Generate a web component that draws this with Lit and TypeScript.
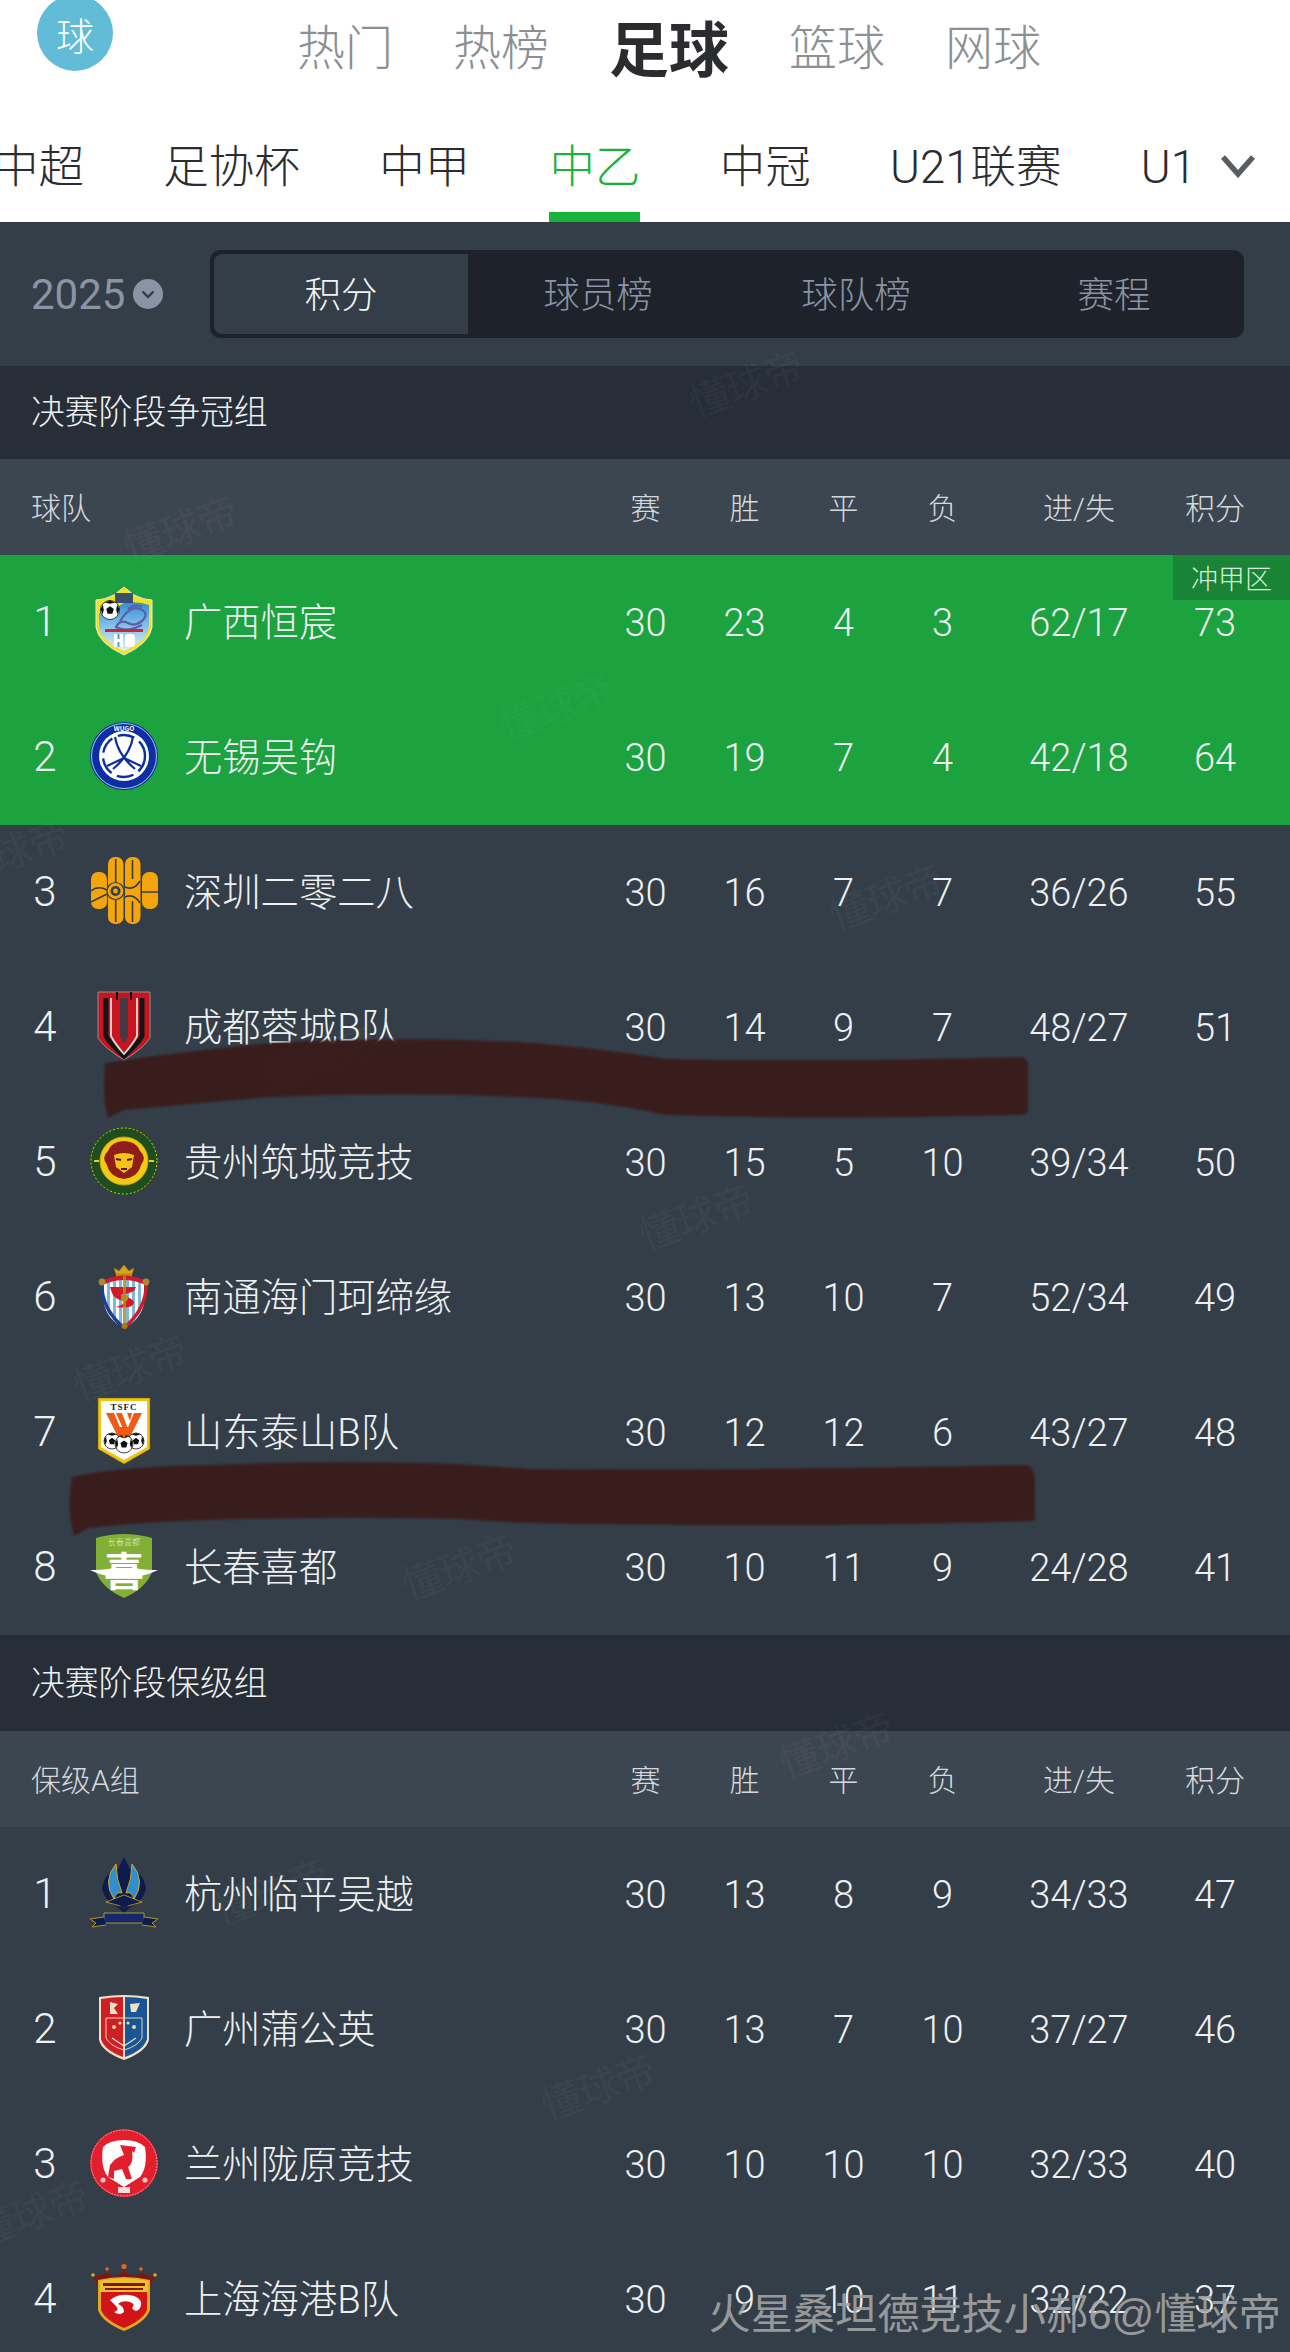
import { LitElement, html, css, svg } from "lit";
import { customElement } from "lit/decorators.js";

type Row = [number, string, string, number, number, number, number, string, number];

const BALL = (cx: number, cy: number, r: number) => svg`
  <circle cx=${cx} cy=${cy} r=${r} fill="#fff" stroke="#111" stroke-width=".8"/>
  <polygon points="${cx},${cy - r * 0.4} ${cx + r * 0.4},${cy - r * 0.1} ${cx + r * 0.25},${cy + r * 0.4} ${cx - r * 0.25},${cy + r * 0.4} ${cx - r * 0.4},${cy - r * 0.1}" fill="#111"/>
  <path d="M${cx - r * 0.55} ${cy - r * 0.8}L${cx} ${cy - r}L${cx + r * 0.55} ${cy - r * 0.8}L${cx} ${cy - r * 0.65}Z" fill="#111"/>
  <path d="M${cx - r} ${cy - r * 0.1}L${cx - r * 0.75} ${cy - r * 0.55}L${cx - r * 0.65} ${cy}L${cx - r * 0.8} ${cy + r * 0.5}Z" fill="#111"/>
  <path d="M${cx + r} ${cy - r * 0.1}L${cx + r * 0.75} ${cy - r * 0.55}L${cx + r * 0.65} ${cy}L${cx + r * 0.8} ${cy + r * 0.5}Z" fill="#111"/>`;

const LOGOS: Record<string, unknown> = {
  guangxi: svg`
    <defs><linearGradient id="gx" x1="0" y1="0" x2="0" y2="1"><stop offset="0" stop-color="#2f8ed6"/><stop offset=".55" stop-color="#8fc8ea"/><stop offset="1" stop-color="#dff0fa"/></linearGradient></defs>
    <path d="M34 0 L44 8 Q54 13 62 13 L62 40 Q60 56 34 68 Q8 56 6 40 L6 13 Q14 13 24 8Z" fill="#f3e21a" stroke="#e4ecf2" stroke-width="1"/>
    <path d="M9 26 Q22 24 34 16 Q48 14 59 18 L59 40 Q57 54 34 64 Q11 54 9 40Z" fill="url(#gx)"/>
    <rect x="25" y="6" width="18" height="10" fill="#3a4f6e"/>
    <path d="M30 34 q10 -16 20 -12 q10 4 2 12 q-8 6 -14 2 q-8 -4 -12 4 q10 6 26 -2 M38 22 q8 -6 14 -2" fill="none" stroke="#5a5fa8" stroke-width="2.2"/>
    ${BALL(20, 23, 9.5)}
    <rect x="15" y="42" width="38" height="3" fill="#d2233a"/>
    <rect x="24" y="47" width="9" height="13" fill="#fff"/><rect x="35" y="47" width="10" height="13" rx="3.5" fill="#fff"/>
    <rect x="27.5" y="47" width="2" height="5" fill="#4f9ed6"/><rect x="27.5" y="55" width="2" height="5" fill="#4f9ed6"/>`,
  wuxi: svg`
    <circle cx="34" cy="34" r="34" fill="#0c2fa6"/>
    <circle cx="34" cy="34" r="32.5" fill="none" stroke="#dfe6f5" stroke-width=".8"/>
    <circle cx="34" cy="34" r="25" fill="#fff"/>
    <circle cx="34" cy="34" r="21" fill="none" stroke="#0c2fa6" stroke-width="2.4" stroke-dasharray="17 6"/>
    <path d="M25 15 Q28 33 45 47 M43 15 Q40 33 23 47 M17 44 L34 36 L51 44" fill="none" stroke="#0c2fa6" stroke-width="2.2"/>
    <text x="34" y="9" text-anchor="middle" class="lt" font-size="6.5" fill="#fff" font-weight="700">WUGO</text>`,
  shenzhen: svg`
    <g fill="#f5a50c">
      <rect x="18" y="0" width="15.5" height="67" rx="7"/><rect x="35" y="0" width="15.5" height="67" rx="7"/>
      <rect x="1" y="15" width="16" height="37" rx="7"/><rect x="52" y="15" width="16" height="37" rx="7"/>
    </g>
    <path d="M25.7 2 V25 M25.7 43 V65 M42.5 3 V22 M42.5 44 V65 M1 34 Q8 28 17 33 M52 35 H68 M1 45 L17 37" stroke="#343e48" stroke-width="1.6" fill="none"/>
    <path d="M35 30 Q44 34 50 24 M35 40 Q44 36 50 46" stroke="#343e48" stroke-width="1.6" fill="none"/>
    <circle cx="25.5" cy="34" r="8.5" fill="#f5a50c" stroke="#343e48" stroke-width="1.2"/>
    <circle cx="25.5" cy="34" r="5" fill="#343e48"/><circle cx="25.5" cy="34" r="2.4" fill="#f5a50c"/>`,
  chengdu: svg`
    <path d="M8 0 H60 V46 Q54 56 34 68 Q14 56 8 46Z" fill="#c8141f" stroke="#8f8f8f" stroke-width="1"/>
    <path d="M16 6 V44 Q20 52 34 64 Q48 52 52 44 V6" fill="none" stroke="#141414" stroke-width="5"/>
    <path d="M21 6 V44 Q25 52 34 62 Q43 52 47 44 V6" fill="none" stroke="#dcdcdc" stroke-width="1.8"/>
    <path d="M25 6 V44 L34 58 L43 44 V6 H38 V44 L34 52 L30 44 V6Z" fill="#c8141f"/>
    <rect x="26" y="0" width="2" height="8" fill="#141414"/><rect x="40" y="0" width="2" height="8" fill="#141414"/>
    <path d="M30 6 H38 V44 L34 52 L30 44Z" fill="#343e48" opacity=".9"/>`,
  guizhou: svg`
    <circle cx="34" cy="34" r="34" fill="#1e4d1f"/>
    <circle cx="34" cy="34" r="33" fill="none" stroke="#e6d015" stroke-width="1" stroke-dasharray="2 2"/>
    <circle cx="34" cy="34" r="24" fill="#f3c913"/><circle cx="34" cy="34" r="24" fill="none" stroke="#c9a80c" stroke-width="1"/>
    <path d="M34 14 Q46 14 50 24 Q57 30 51 38 Q48 50 34 52 Q20 50 17 38 Q11 30 18 24 Q22 14 34 14Z" fill="#8f1e1a"/>
    <path d="M24 28 Q34 24 44 28 L42 40 L34 46 L26 40Z" fill="#f1c416"/>
    <path d="M26 32 L31 33 M37 33 L42 32 M31 42 H37" stroke="#5a1410" stroke-width="2"/>
    <rect x="4" y="33" width="5" height="2" fill="#e6d015"/><rect x="59" y="33" width="5" height="2" fill="#e6d015"/>`,
  nantong: svg`
    <path d="M24 6 L26 12 H42 L44 6 L39 9 L34 3 L29 9Z" fill="#d9a520" stroke="#a87a10" stroke-width=".6"/>
    <rect x="26" y="12" width="16" height="3" fill="#c58a12"/>
    <path d="M14 20 Q34 12 54 20 L54 42 Q50 58 34 66 Q18 58 14 42Z" fill="#fff"/>
    <clipPath id="nt"><path d="M14 20 Q34 12 54 20 L54 42 Q50 58 34 66 Q18 58 14 42Z"/></clipPath>
    <g clip-path="url(#nt)" fill="#7db9dc">
      <rect x="17" y="14" width="3" height="50"/><rect x="23" y="14" width="3" height="50"/><rect x="29" y="14" width="3" height="50"/><rect x="36" y="14" width="3" height="50"/><rect x="42" y="14" width="3" height="50"/><rect x="48" y="14" width="3" height="50"/>
    </g>
    <path d="M12 22 Q11 46 34 66" fill="none" stroke="#1d3f94" stroke-width="3.4"/>
    <path d="M56 22 Q57 46 34 66" fill="none" stroke="#d21a2a" stroke-width="3.4"/>
    <path d="M14 18 Q34 9 54 18 L53 22 Q34 14 15 22Z" fill="#d21a2a"/>
    <circle cx="12" cy="20" r="3.4" fill="#b0862b"/><circle cx="56" cy="20" r="3.4" fill="#b0862b"/>
    <path d="M20 25 H46 L44 29 Q38 32 30 33 Q44 36 44 41 Q42 47 26 45 Q36 42 34 39 Q24 37 22 31Z" fill="#d21a2a"/>
    <rect x="33" y="14" width="3" height="52" fill="#b98a20" opacity=".85"/><circle cx="34.5" cy="36" r="3.6" fill="#b98a20"/><circle cx="34.5" cy="64" r="3" fill="#a87a10"/>`,
  shandong: svg`
    <path d="M8 1 H60 V52 L34 67 L8 52Z" fill="#f1c40f" stroke="#6b5a10" stroke-width=".5"/>
    <path d="M11 4 H57 V50 L34 63 L11 50Z" fill="#fff"/>
    <text x="34" y="12.5" text-anchor="middle" font-family="Liberation Serif, serif" font-size="9" font-weight="700" letter-spacing="1" fill="#222">TSFC</text>
    <path d="M16 16 H24 L34 40 L44 16 H52 L38 44 H30Z M26 16 H32 L38 32 L35 36Z M37 16 H42 L40 24Z" fill="#ef5a16"/>
    ${BALL(22, 44, 8)}${BALL(46, 44, 8)}${BALL(34, 47, 9)}
    <path d="M28 30 L34 42 L40 30" fill="#ef5a16"/>`,
  changchun: svg`
    <path d="M6 6 Q34 -2 62 6 L62 40 Q56 56 34 66 Q12 56 6 40Z" fill="#82b035"/>
    <text x="34" y="13" text-anchor="middle" class="lt" font-size="8" fill="#e8f2d4">长春喜都</text>
    <path d="M0 38 Q16 38 22 36 H46 Q52 38 68 38 Q56 44 46 44 H22 Q12 44 0 38Z" fill="#fff"/>
    <text x="34" y="54" text-anchor="middle" class="lt" font-size="40" font-weight="700" fill="#fff">喜</text>`,
  hangzhou: svg`
    <path d="M34 -2 L40 10 Q54 14 56 30 Q52 44 41 48 L34 54 L27 48 Q16 44 12 30 Q14 14 28 10Z" fill="#0d1b4d"/>
    <path d="M26 5 Q12 22 24 40 Q26 32 32 34 Q26 20 26 5Z M42 5 Q56 22 44 40 Q42 32 36 34 Q42 20 42 5Z" fill="#2f8fd0" stroke="#d6a91e" stroke-width="1"/>
    <path d="M16 43 L34 36 L52 43 L34 48Z" fill="#0d1b4d" stroke="#d6a91e" stroke-width=".8"/>
    <circle cx="34" cy="43" r="5.5" fill="#0d1b4d"/>
    <path d="M14 54 H54 V64 H14Z" fill="#14296b" stroke="#d6a91e" stroke-width=".8"/>
    <path d="M14 58 L0 60 L6 64 L2 68 L16 66 M54 58 L68 60 L62 64 L66 68 L52 66" fill="#0d1b4d" stroke="#d6a91e" stroke-width=".8"/>`,
  guangzhou: svg`
    <path d="M9 3 Q34 -1 59 3 V46 Q56 58 34 66 Q12 58 9 46Z" fill="#efe2c2"/>
    <path d="M11 5 Q22 3 33 3 V63 Q14 56 11 45Z" fill="#cf1f26"/>
    <path d="M35 3 Q46 3 57 5 V45 Q54 56 35 63Z" fill="#1a5596"/>
    <path d="M16 24 H52 V44 Q48 52 34 56 Q20 52 16 44Z" fill="none" stroke="#efe2c2" stroke-width=".9"/>
    <path d="M20 8 L28 10 L24 14 L28 20 L20 20Z M40 10 L50 9 L46 18 L41 18Z" fill="#efe2c2"/>
    <g fill="#f2d3a4"><circle cx="24" cy="33" r="2"/><circle cx="30" cy="29" r="1.6"/><circle cx="44" cy="33" r="2"/><circle cx="38" cy="29" r="1.6"/></g>
    <path d="M34 32 V48 M22 44 Q28 48 34 52 Q40 48 46 44" stroke="#efe2c2" stroke-width="1.2" fill="none"/>`,
  lanzhou: svg`
    <circle cx="34" cy="34" r="34" fill="#e31f2d"/>
    <circle cx="34" cy="34" r="33" fill="none" stroke="#f5b5ba" stroke-width=".8" stroke-dasharray="2 1"/>
    <path d="M34 11 Q48 11 55 18 Q58 38 50 48 L34 58 L18 48 Q10 38 13 18 Q20 11 34 11Z" fill="#fff"/>
    <path d="M30 16 L46 18 L44 24 L42 22 Q44 34 38 38 L42 50 L36 50 L32 40 L24 42 L24 50 L18 48 L20 36 Q26 28 34 26Z" fill="#e31f2d"/>
    <rect x="28" y="58" width="12" height="6" fill="#fff" opacity=".85"/>
    <circle cx="13" cy="51" r="2.6" fill="#f7c2c5"/><circle cx="55" cy="51" r="2.6" fill="#f7c2c5"/>`,
  shanghai: svg`
    <g fill="#e8641b"><circle cx="34" cy="2.5" r="2.6"/><circle cx="17" cy="5" r="1.8"/><circle cx="51" cy="5" r="1.8"/></g>
    <g fill="#e3a81d"><circle cx="3" cy="11" r="1.8"/><circle cx="65" cy="11" r="1.8"/></g>
    <path d="M3 13 L17 9 L25 13 L34 7 L43 13 L51 9 L65 13 L60 22 H8Z" fill="#7d1712"/>
    <path d="M8 16 Q34 10 60 16 V46 Q56 58 34 67 Q12 58 8 46Z" fill="#e3a81d"/>
    <path d="M11 28 H57 V46 Q53 56 34 64 Q15 56 11 46Z" fill="#d01418"/>
    <path d="M10 17 Q34 12 58 17 V28 H10Z" fill="#efc130"/>
    <rect x="13" y="19" width="42" height="3" fill="#7d1712"/><rect x="15" y="24" width="38" height="2" fill="#7d1712"/>
    <path d="M20 36 Q30 28 44 32 Q54 36 50 44 Q46 50 42 44 Q46 40 40 38 Q32 36 28 40 Q34 42 34 48 Q30 52 24 48 Q30 46 26 42 Z" fill="#fff"/>`,
};

const GROUP_A: Row[] = [
  [1, "guangxi", "广西恒宸", 30, 23, 4, 3, "62/17", 73],
  [2, "wuxi", "无锡吴钩", 30, 19, 7, 4, "42/18", 64],
  [3, "shenzhen", "深圳二零二八", 30, 16, 7, 7, "36/26", 55],
  [4, "chengdu", "成都蓉城B队", 30, 14, 9, 7, "48/27", 51],
  [5, "guizhou", "贵州筑城竞技", 30, 15, 5, 10, "39/34", 50],
  [6, "nantong", "南通海门珂缔缘", 30, 13, 10, 7, "52/34", 49],
  [7, "shandong", "山东泰山B队", 30, 12, 12, 6, "43/27", 48],
  [8, "changchun", "长春喜都", 30, 10, 11, 9, "24/28", 41],
];
const GROUP_B: Row[] = [
  [1, "hangzhou", "杭州临平吴越", 30, 13, 8, 9, "34/33", 47],
  [2, "guangzhou", "广州蒲公英", 30, 13, 7, 10, "37/27", 46],
  [3, "lanzhou", "兰州陇原竞技", 30, 10, 10, 10, "32/33", 40],
  [4, "shanghai", "上海海港B队", 30, 9, 10, 11, "32/22", 37],
];

const MARKS: [number, number][] = [
  [745, 382], [179, 527], [555, 705], [10, 850], [885, 895], [318, 1057], [695, 1215],
  [129, 1366], [458, 1565], [835, 1743], [270, 1890], [597, 2085], [30, 2211],
];

@customElement("app-root")
export class AppRoot extends LitElement {
  static styles = css`
    :host {
      display: block; position: relative; width: 1290px; height: 2352px; overflow: hidden;
      background: #343e48; color: #eef0f2;
      font-family: Roboto, "Noto Sans CJK SC", sans-serif; font-weight: 300;
    }
    .lt { font-family: "Noto Sans CJK SC", sans-serif; }
    .top { height: 100px; background: #fff; display: flex; align-items: center; padding-left: 297px; gap: 60px; position: relative; overflow: hidden; }
    .ball { position: absolute; left: 37px; top: -5px; width: 76px; height: 76px; border-radius: 50%; background: #62bcd8; color: #fff; font-size: 38px; display: flex; align-items: center; justify-content: center; }
    .top span.t { font-size: 48px; color: #8b9095; line-height: 1; margin-top: -2px; }
    .top span.on { font-size: 60px; font-weight: 700; color: #2a2c30; margin-top: -10px; }
    .sub { height: 122px; background: #fff; display: flex; }
    .subtabs { width: 1197px; overflow: hidden; display: flex; gap: 79.3px; margin-left: -7px; flex: none; }
    .subtabs div { height: 122px; padding-top: 38px; box-sizing: border-box; font-size: 45.5px; line-height: 60px; color: #2a2c30; white-space: nowrap; flex: none; border-bottom: 10px solid transparent; }
    .subtabs div.on { color: #18b33a; border-bottom-color: #18b33a; }
    .chev { flex: 1; display: flex; align-items: center; padding: 10px 0 0 30px; }
    .season { height: 144px; display: flex; align-items: center; padding-left: 31px; }
    .year { font-size: 42px; font-weight: 400; color: #8a94a4; width: 91px; }
    .yicon { margin: 0 0 0 11px; width: 30px; height: 30px; flex: none; }
    .seg { margin-left: 47px; width: 1034px; height: 88px; box-sizing: border-box; border-radius: 10px; background: #1e232b; padding: 4px 1px; display: flex; }
    .seg div { width: 258px; flex: none; box-sizing: border-box; display: flex; align-items: center; justify-content: center; font-size: 36.5px; color: #8a94a4; padding-bottom: 3px; }
    .seg div.on { width: 254px; margin: 0 1px 0 3px; padding-right: 0; background: #343e48; color: #f2f3f5; border-radius: 8px 0 0 8px; }
    .sect { height: 93px; background: #272e37; display: flex; align-items: center; padding: 0 0 6px 31px; box-sizing: border-box; font-size: 33.8px; color: #f0f1f3; }
    .sect.b { height: 96px; }
    .row { display: flex; align-items: center; height: 135px; position: relative; }
    .head { height: 96px; background: #3c4651; font-size: 30px; color: #d5d9dd; padding-bottom: 2px; box-sizing: border-box; }
    .head .team { padding-left: 31px; flex: 1; }
    .green { background: #1ca23e; }
    .rank { width: 90px; text-align: center; font-size: 42px; padding-bottom: 2px; flex: none; }
    .logo { width: 68px; height: 68px; flex: none; margin-bottom: 4px; margin-right: 26px; }
    .logo svg { display: block; overflow: visible; }
    .name { flex: 1; font-size: 38.3px; white-space: nowrap; padding-bottom: 6px; }
    .c { width: 99px; text-align: center; flex: none; font-size: 38px; }
    .gd { width: 174px; text-align: center; flex: none; font-size: 38px; }
    .pts { width: 98px; text-align: center; flex: none; font-size: 38px; margin-right: 26px; }
    .head .c, .head .gd, .head .pts { font-size: 30px; }
    .badge { position: absolute; right: 0; top: 0; width: 117px; height: 45px; background: #1a8436; color: #d9efdd; font-size: 27px; display: flex; align-items: center; justify-content: center; }
    .marks { position: absolute; inset: 0; pointer-events: none; }
    .marks span { position: absolute; transform: translate(-50%, -50%) rotate(-20deg); font-size: 40px; font-weight: 400; letter-spacing: -1px; color: rgba(255,255,255,.055); white-space: nowrap; }
    .scrib { position: absolute; left: 0; top: 0; width: 1290px; height: 2352px; pointer-events: none; filter: blur(1px); opacity: .96; }
    .caption { position: absolute; right: 9px; top: 2285px; font-family: "Liberation Sans", "Noto Sans CJK SC", sans-serif; font-weight: 400; font-size: 42.2px; line-height: 60px; color: rgba(165,165,165,.9); white-space: nowrap; }
  `;

  private teamRow(r: Row, green = false, badge = false) {
    return html`<div class="row ${green ? "green" : ""}">
      <div class="rank">${r[0]}</div>
      <div class="logo"><svg width="68" height="68" viewBox="0 0 68 68">${LOGOS[r[1]]}</svg></div>
      <div class="name">${r[2]}</div>
      <div class="c">${r[3]}</div><div class="c">${r[4]}</div><div class="c">${r[5]}</div><div class="c">${r[6]}</div>
      <div class="gd">${r[7]}</div><div class="pts">${r[8]}</div>
      ${badge ? html`<div class="badge">冲甲区</div>` : ""}
    </div>`;
  }

  private headRow(label: string) {
    return html`<div class="row head">
      <div class="team">${label}</div>
      <div class="c">赛</div><div class="c">胜</div><div class="c">平</div><div class="c">负</div>
      <div class="gd">进/失</div><div class="pts">积分</div>
    </div>`;
  }

  render() {
    return html`
      <div class="top">
        <div class="ball">球</div>
        <span class="t">热门</span><span class="t">热榜</span><span class="on">足球</span><span class="t">篮球</span><span class="t">网球</span>
      </div>
      <div class="sub">
        <div class="subtabs">
          <div>中超</div><div>足协杯</div><div>中甲</div><div class="on">中乙</div><div>中冠</div><div>U21联赛</div><div>U1</div>
        </div>
        <div class="chev"><svg width="36" height="24" viewBox="0 0 36 24"><path d="M3 3 L18 20 L33 3" fill="none" stroke="#5a5d60" stroke-width="5.5"/></svg></div>
      </div>
      <div class="season">
        <div class="year">2025</div>
        <svg class="yicon" viewBox="0 0 30 30"><circle cx="15" cy="15" r="15" fill="#8a94a4"/><path d="M9.5 12.5 L15 18 L20.5 12.5" fill="none" stroke="#343e48" stroke-width="2.4"/></svg>
        <div class="seg"><div class="on">积分</div><div>球员榜</div><div>球队榜</div><div>赛程</div></div>
      </div>
      <div class="sect">决赛阶段争冠组</div>
      ${this.headRow("球队")}
      ${GROUP_A.map((r, i) => this.teamRow(r, i < 2, i === 0))}
      <div class="sect b">决赛阶段保级组</div>
      ${this.headRow("保级A组")}
      ${GROUP_B.map((r) => this.teamRow(r))}
      <div class="marks">${MARKS.map((m) => html`<span style="left:${m[0]}px;top:${m[1]}px">懂球帝</span>`)}</div>
      <svg class="scrib" viewBox="0 0 1290 2352">
        <path d="M105 1063 Q180 1052 270 1043 Q400 1036 519 1042 Q600 1048 666 1059 Q850 1062 1023 1057 L1028 1062 L1028 1112 L1023 1115 Q840 1120 666 1115 Q600 1100 519 1097 Q400 1092 270 1097 Q190 1104 124 1110 L108 1118 Q102 1100 105 1063Z" fill="#3a1c1c"/>
        <path d="M72 1477 Q120 1466 209 1465 Q340 1460 458 1464 L528 1469 Q800 1470 1026 1465 Q1034 1466 1035 1480 L1035 1521 Q800 1528 528 1523 L458 1519 Q340 1516 209 1520 Q140 1522 88 1528 L74 1536 Q66 1510 72 1477Z" fill="#3a1c1c"/>
      </svg>
      <div class="caption">火星桑坦德竞技小郝6@懂球帝</div>
    `;
  }
}
